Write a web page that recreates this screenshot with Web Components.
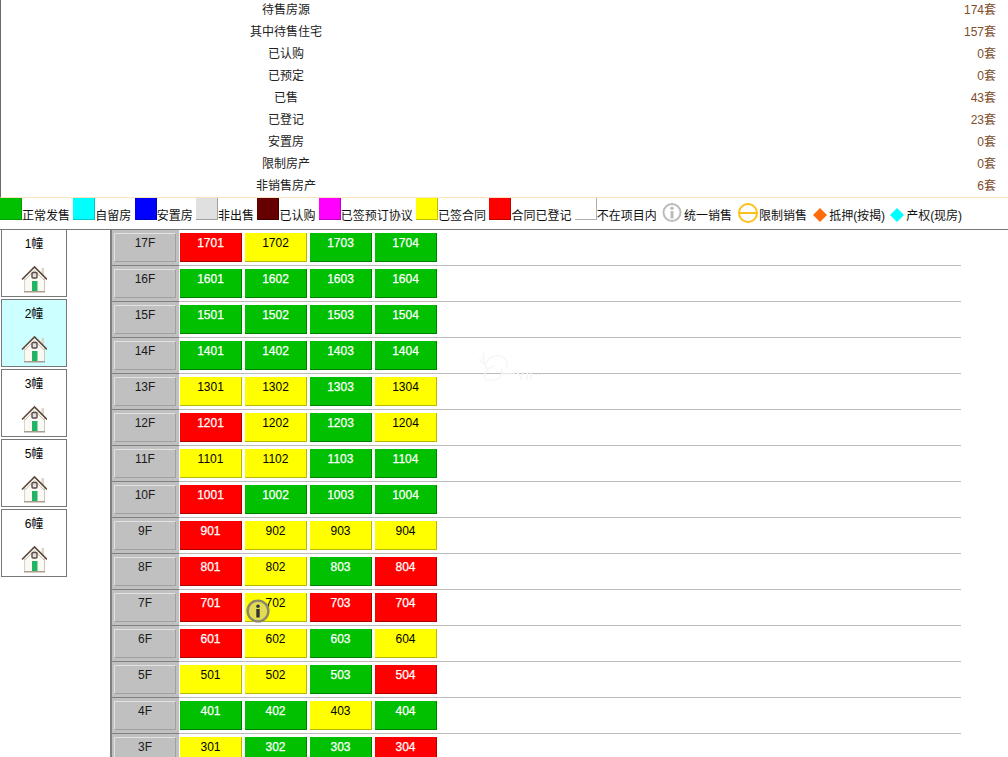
<!DOCTYPE html>
<html lang="zh">
<head>
<meta charset="utf-8">
<title>楼盘表</title>
<style>
  html, body { margin: 0; padding: 0; height: 757px; overflow: hidden; background: #fff; }
  body { font: 12px "Liberation Sans", "Noto Sans CJK SC", sans-serif; color: #000; }
</style>
</head>
<body>
<stat-table>
  <stat-row label="待售房源" value="174套"></stat-row>
  <stat-row label="其中待售住宅" value="157套"></stat-row>
  <stat-row label="已认购" value="0套"></stat-row>
  <stat-row label="已预定" value="0套"></stat-row>
  <stat-row label="已售" value="43套"></stat-row>
  <stat-row label="已登记" value="23套"></stat-row>
  <stat-row label="安置房" value="0套"></stat-row>
  <stat-row label="限制房产" value="0套"></stat-row>
  <stat-row label="非销售房产" value="6套"></stat-row>
</stat-table>
<legend-bar></legend-bar>
<main-area>
  <building-list slot="side">
    <building-card name="1幢"></building-card>
    <building-card name="2幢" selected></building-card>
    <building-card name="3幢"></building-card>
    <building-card name="5幢"></building-card>
    <building-card name="6幢"></building-card>
  </building-list>
  <floor-grid>
    <floor-row floor="17" units="RYGG"></floor-row>
    <floor-row floor="16" units="GGGG"></floor-row>
    <floor-row floor="15" units="GGGG"></floor-row>
    <floor-row floor="14" units="GGGG"></floor-row>
    <floor-row floor="13" units="YYGY"></floor-row>
    <floor-row floor="12" units="RYGY"></floor-row>
    <floor-row floor="11" units="YYGG"></floor-row>
    <floor-row floor="10" units="RGGG"></floor-row>
    <floor-row floor="9" units="RYYY"></floor-row>
    <floor-row floor="8" units="RYGR"></floor-row>
    <floor-row floor="7" units="RYRR" info="1"></floor-row>
    <floor-row floor="6" units="RYGY"></floor-row>
    <floor-row floor="5" units="YYGR"></floor-row>
    <floor-row floor="4" units="GGYG"></floor-row>
    <floor-row floor="3" units="YGGR"></floor-row>
  </floor-grid>
</main-area>

<script>
(function() {
    'use strict';

    class ShadowBase extends HTMLElement {
        constructor() {
            super();
            this.attachShadow({ mode: 'open' });
        }
        connectedCallback() {
            this.render();
        }
    }

    class StatTable extends ShadowBase {
        render() {
            this.shadowRoot.innerHTML = `
                <style>
                    :host { display: block; height: 198px; border-left: 1px solid #6e6a62; border-bottom: 1px solid #fbe3c0; margin-top: -1px; }
                </style>
                <slot></slot>
            `;
        }
    }

    class StatRow extends ShadowBase {
        render() {
            this.shadowRoot.innerHTML = `
                <style>
                    :host { display: grid; grid-template-columns: 570px 1fr; height: 22px; line-height: 22px; font-size: 12px; color: #222; }
                    .label { text-align: center; }
                    .value { text-align: right; padding-right: 12px; color: #7c4e2c; }
                </style>
                <div class="label">${this.getAttribute('label')}</div>
                <div class="value">${this.getAttribute('value')}</div>
            `;
        }
    }

    const LEGEND = [
        ['#00c000', '#00a000', '正常发售'],
        ['#00ffff', '#00c8c8', '自留房'],
        ['#0000ff', '#0000c0', '安置房'],
        ['#e0e0e0', '#a0a0a0', '非出售'],
        ['#660000', '#440000', '已认购'],
        ['#ff00ff', '#c000c0', '已签预订协议'],
        ['#ffff00', '#c0c000', '已签合同'],
        ['#ff0000', '#c00000', '合同已登记'],
        ['#ffffff', '#b0b0b0', '不在项目内']
    ];

    class LegendBar extends ShadowBase {
        render() {
            const swatches = LEGEND.map(([bg, edge, text]) =>
                `<span class="swatch" style="background:${bg};border-color:${edge}"></span><span class="txt">${text}</span>`
            ).join('<span class="sp"></span>');
            this.shadowRoot.innerHTML = `
                <style>
                    :host { display: flex; align-items: flex-start; height: 31px; border-bottom: 1px solid #777; font-size: 12px; color: #111; white-space: nowrap; }
                    .swatch { width: 21px; height: 21px; flex: none; border-right: 1px solid; border-bottom: 1px solid; }
                    .txt { line-height: 16px; margin-top: 10px; }
                    .sp { width: 3.33px; flex: none; }
                    svg { flex: none; display: block; }
                </style>
                ${swatches}
                <svg style="margin:5px 2px 0 5.33px" width="20" height="20" viewBox="0 0 20 20">
                    <circle cx="10" cy="9.5" r="8.5" fill="#fff" stroke="#bcbcbc" stroke-width="2"/>
                    <circle cx="10" cy="5.3" r="1.7" fill="#bcbcbc"/>
                    <rect x="8.5" y="8" width="3" height="7.5" fill="#bcbcbc"/>
                </svg>
                <span class="txt">统一销售</span>
                <svg style="margin:5px 1px 0 6px" width="20" height="20" viewBox="0 0 20 20">
                    <circle cx="10" cy="10" r="9" fill="#fff" stroke="#fdc01a" stroke-width="2"/>
                    <rect x="1" y="9" width="18" height="2" fill="#fdc01a"/>
                </svg>
                <span class="txt">限制销售</span>
                <svg style="margin:10px 2px 0 6px" width="14" height="14" viewBox="0 0 14 14">
                    <polygon points="7,0 14,7 7,14 0,7" fill="#ff6a0a"/>
                </svg>
                <span class="txt">抵押(按揭)</span>
                <svg style="margin:10px 2px 0 5px" width="14" height="14" viewBox="0 0 14 14">
                    <polygon points="7,0 14,7 7,14 0,7" fill="#00ffff"/>
                </svg>
                <span class="txt">产权(现房)</span>
            `;
        }
    }

    class MainArea extends ShadowBase {
        render() {
            this.shadowRoot.innerHTML = `
                <style>
                    :host { display: grid; grid-template-columns: 110px 851px; position: relative; }
                    .mark { position: absolute; left: 473px; top: 120px; pointer-events: none; }
                </style>
                <slot name="side"></slot>
                <slot></slot>
                <svg class="mark" width="72" height="36" viewBox="0 0 72 36" fill="none" stroke="#f6f6f6" stroke-width="1.5">
                    <path d="M6 9 12 15M10 3 12 15M18 6 12 15 16 22"/>
                    <path d="M18 8C26 2 36 8 34 18M22 16C12 18 8 28 14 30 24 32 32 26 28 18"/>
                    <path d="M30 24H42M44 22 48 28M50 22 48 30M54 22V30M58 22V30"/>
                    <path d="M58 25H70" stroke-dasharray="2 2"/>
                </svg>
            `;
        }
    }

    class BuildingList extends ShadowBase {
        render() {
            this.shadowRoot.innerHTML = `
                <style>
                    :host { display: flex; flex-direction: column; gap: 2px; margin-top: -1px; padding-left: 1px; }
                </style>
                <slot></slot>
            `;
        }
    }

    class BuildingCard extends ShadowBase {
        render() {
            const bg = this.hasAttribute('selected') ? '#ccffff' : '#fff';
            this.shadowRoot.innerHTML = `
                <style>
                    :host { display: block; box-sizing: border-box; width: 66px; height: 68px; border: 1px solid #777; background: ${bg}; text-align: center; font-size: 12px; color: #000; }
                    .name { line-height: 16px; padding-top: 6px; }
                    svg { display: block; margin: 13px auto 0; }
                </style>
                <div class="name">${this.getAttribute('name')}</div>
                <svg width="26" height="28" viewBox="0 0 26 28">
                    <rect x="20.5" y="3" width="2.5" height="7" fill="#ddd6c8"/>
                    <path d="M3 13 13.5 2.5 24 13V26.5H3Z" fill="#fbf9f4"/>
                    <path d="M3.5 13V26.5" stroke="#d9d4c8"/>
                    <path d="M23.5 13V26.5" stroke="#cdc7b9"/>
                    <path d="M1 14.5 13.5 2 26 14.5" fill="none" stroke="#5e4a3c" stroke-width="1.6"/>
                    <path d="M4 15 13.5 5.5 23 15" fill="none" stroke="#cbbfb2" stroke-width="1"/>
                    <rect x="11" y="7.5" width="5" height="5.5" rx="1" fill="#e4e0dc" stroke="#5a4a4a" stroke-width="1.4"/>
                    <rect x="11" y="16" width="5.5" height="10.5" fill="#22b464"/>
                    <rect x="3" y="26" width="21" height="1.5" fill="#a89c8c"/>
                </svg>
            `;
        }
    }

    class FloorGrid extends ShadowBase {
        render() {
            this.shadowRoot.innerHTML = `
                <style>
                    :host { display: block; }
                </style>
                <slot></slot>
            `;
        }
    }

    const UNIT_COLORS = {
        R: ['#ff0000', '#ffffff', '#b00000'],
        Y: ['#ffff00', '#000000', '#b8b800'],
        G: ['#00c000', '#ffffff', '#008000']
    };

    class FloorRow extends ShadowBase {
        render() {
            const floor = this.getAttribute('floor');
            const units = [...this.getAttribute('units')].map((code, i) => {
                const [bg, fg, edge] = UNIT_COLORS[code];
                const no = floor + String(i + 1).padStart(2, '0');
                const badge = this.getAttribute('info') && i === 1 ? '<info-badge></info-badge>' : '';
                // white numbers read heavier in the reference
                const heavy = code === 'Y' ? '' : '-webkit-text-stroke:.25px #fff;';
                return `<div class="unit" style="background:${bg};color:${fg};border-color:${edge};${heavy}">${no}${badge}</div>`;
            }).join('');
            this.shadowRoot.innerHTML = `
                <style>
                    :host { display: flex; box-sizing: border-box; height: 36px; border-bottom: 1px solid #bbb; }
                    .floor { width: 69px; flex: none; box-sizing: border-box; background: #c0c0c0; border-left: 2px solid #808080; border-bottom: 1px solid #808080; margin-bottom: -1px; padding: 3px 3px 2px 2px; }
                    .btn { box-sizing: border-box; height: 29px; border: 1px solid; border-color: #e2e2e2 #a0a0a0 #a0a0a0 #e2e2e2; text-align: center; line-height: 18px; color: #1a1a1a; }
                    .units { display: flex; gap: 3px; padding: 3px 0 0 1px; }
                    .unit { box-sizing: border-box; width: 62px; height: 29px; border-right: 1px solid; border-bottom: 1px solid; text-align: center; line-height: 20px; position: relative; }
                </style>
                <div class="floor"><div class="btn">${floor}F</div></div>
                <div class="units">${units}</div>
            `;
        }
    }

    class InfoBadge extends ShadowBase {
        render() {
            this.shadowRoot.innerHTML = `
                <style>
                    :host { position: absolute; left: 1px; top: 6px; width: 24px; height: 24px; display: block; -webkit-text-stroke: 0; }
                    svg { display: block; }
                </style>
                <svg width="24" height="24" viewBox="0 0 24 24">
                    <circle cx="12" cy="12" r="10.4" fill="#d8cf70" fill-opacity=".75" stroke="#8c8670" stroke-width="2.4"/>
                    <circle cx="12" cy="7.2" r="1.8" fill="#333"/>
                    <rect x="10.3" y="10" width="3.4" height="8.5" fill="#333"/>
                </svg>
            `;
        }
    }

    customElements.define('stat-table', StatTable);
    customElements.define('stat-row', StatRow);
    customElements.define('legend-bar', LegendBar);
    customElements.define('main-area', MainArea);
    customElements.define('building-list', BuildingList);
    customElements.define('building-card', BuildingCard);
    customElements.define('floor-grid', FloorGrid);
    customElements.define('floor-row', FloorRow);
    customElements.define('info-badge', InfoBadge);
})();
</script>
</body>
</html>
